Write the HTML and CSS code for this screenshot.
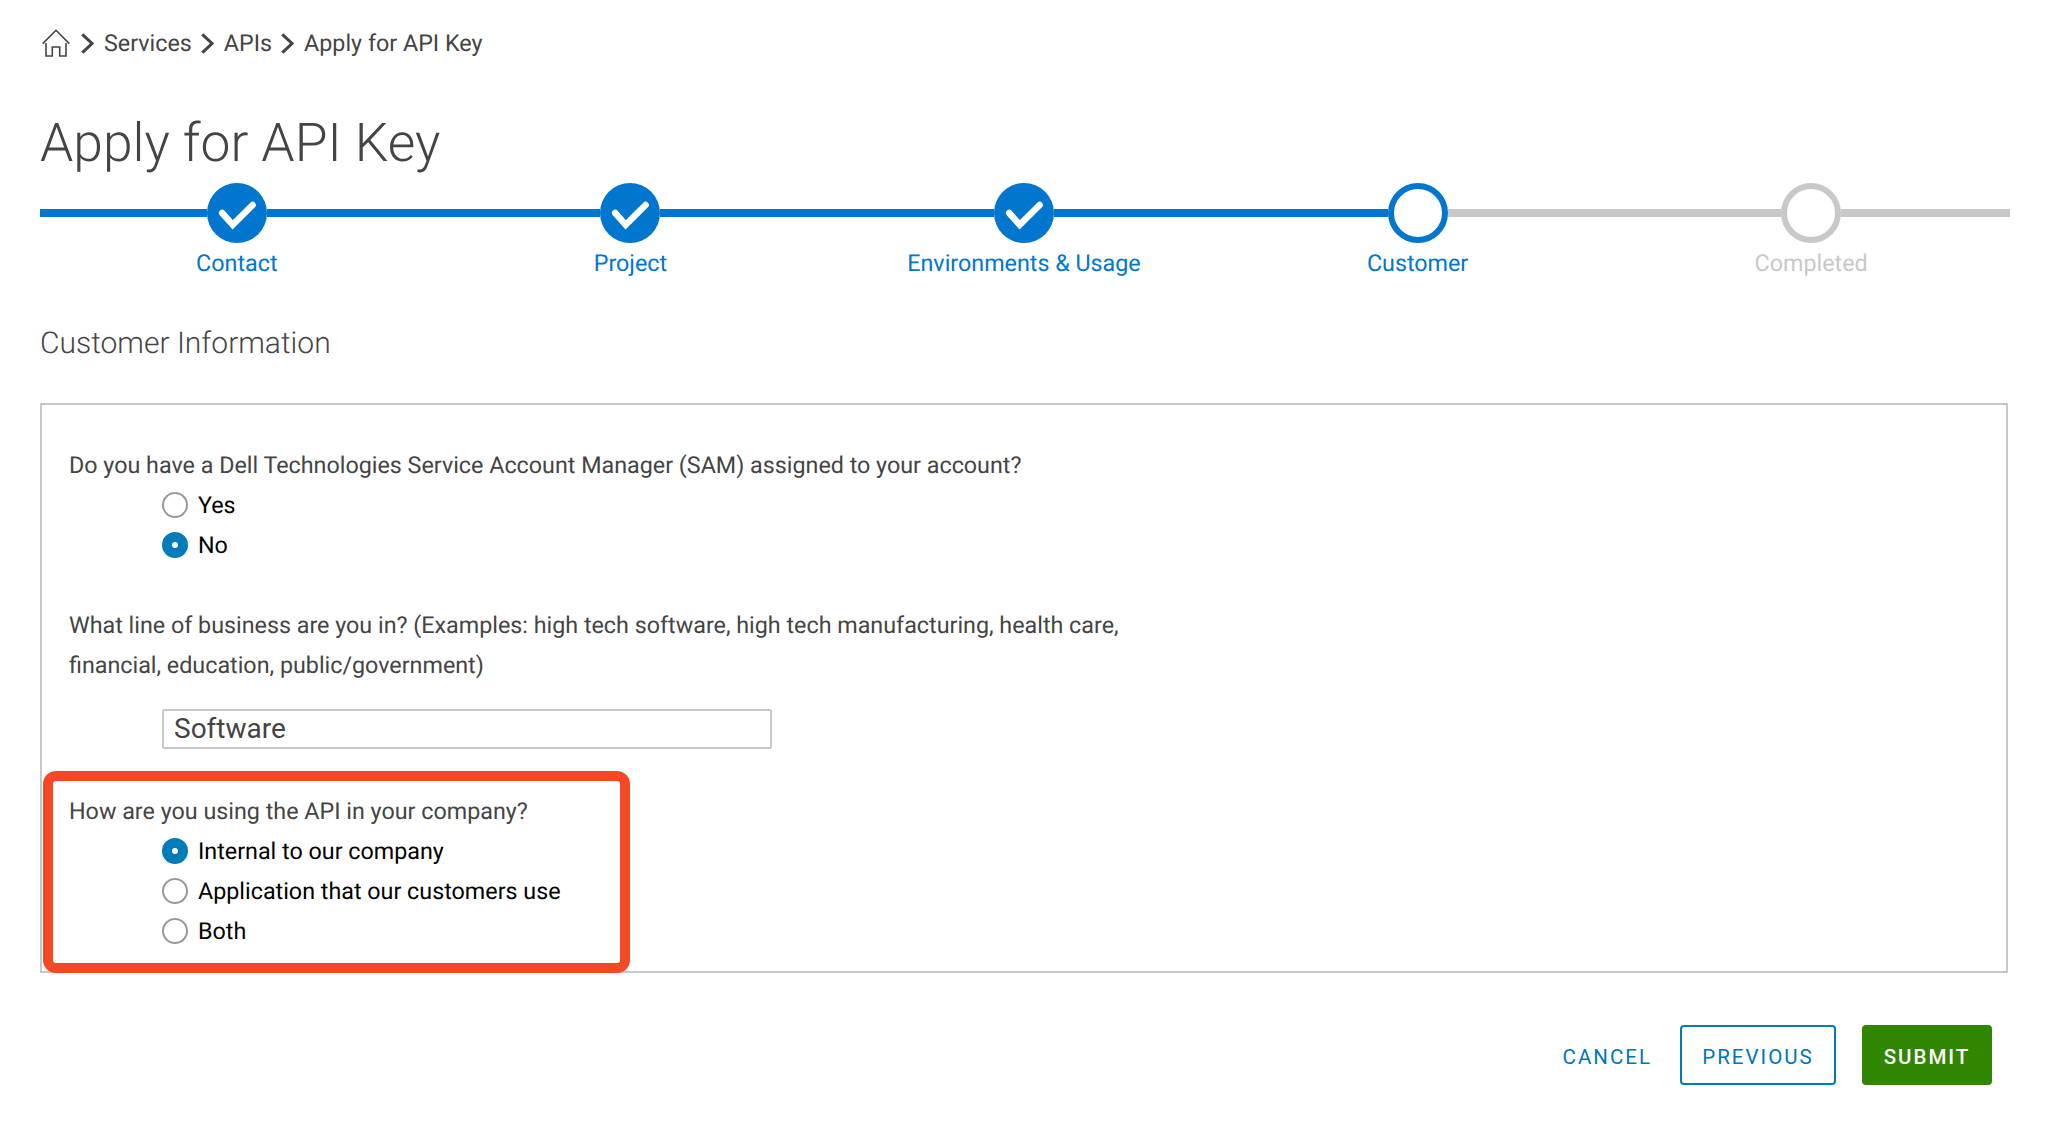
FILE: index.html
```html
<!DOCTYPE html>
<html lang="en">
<head>
  <meta charset="UTF-8" />
  <title>Apply for API Key</title>
  <link rel="stylesheet" href="styles.css">
</head>
<body>

  <nav class="breadcrumb">
    <svg class="home" viewBox="0 0 28 28">
      <path d="M0.7 14.6 L14 1.3 L27.3 14.6 M4 14 V27 H10.3 V18 H17.7 V27 H24 V14" />
    </svg>
    <svg class="chevron" viewBox="0 0 13 21"><path d="M1.3 1.3 L11 10.5 L1.3 19.7" /></svg>
    <a>Services</a>
    <svg class="chevron" viewBox="0 0 13 21"><path d="M1.3 1.3 L11 10.5 L1.3 19.7" /></svg>
    <a>APIs</a>
    <svg class="chevron" viewBox="0 0 13 21"><path d="M1.3 1.3 L11 10.5 L1.3 19.7" /></svg>
    <span>Apply for API Key</span>
  </nav>

  <h1>Apply for API Key</h1>

  <!-- Progress steps -->
  <div class="steps">
    <div class="step done">
      <div class="track"><div class="dot"><svg viewBox="0 0 60 60"><path d="M15.2 30 L25.7 41.8 L45.6 22" /></svg></div></div>
      <div class="label">Contact</div>
    </div>
    <div class="step done">
      <div class="track"><div class="dot"><svg viewBox="0 0 60 60"><path d="M15.2 30 L25.7 41.8 L45.6 22" /></svg></div></div>
      <div class="label">Project</div>
    </div>
    <div class="step done">
      <div class="track"><div class="dot"><svg viewBox="0 0 60 60"><path d="M15.2 30 L25.7 41.8 L45.6 22" /></svg></div></div>
      <div class="label">Environments &amp; Usage</div>
    </div>
    <div class="step current">
      <div class="track"><div class="dot"></div></div>
      <div class="label">Customer</div>
    </div>
    <div class="step">
      <div class="track"><div class="dot"></div></div>
      <div class="label">Completed</div>
    </div>
  </div>

  <h2>Customer Information</h2>

  <form>
    <div class="panel">
      <div class="question">Do you have a Dell Technologies Service Account Manager (SAM) assigned to your account?</div>
      <div class="options">
        <label><input type="radio" name="sam"> Yes</label>
        <label><input type="radio" name="sam" checked> No</label>
      </div>

      <div class="question business">What line of business are you in? (Examples: high tech software, high tech manufacturing, health care,<br>financial, education, public/government)</div>
      <input class="text" type="text" value="Software">

      <div class="usage">
        <div class="question">How are you using the API in your company?</div>
        <div class="options">
          <label><input type="radio" name="usage" checked> Internal to our company</label>
          <label><input type="radio" name="usage"> Application that our customers use</label>
          <label><input type="radio" name="usage"> Both</label>
        </div>
        <div class="highlight"></div>
      </div>
    </div>

    <div class="actions">
      <button type="button" class="cancel">CANCEL</button>
      <button type="button" class="previous">PREVIOUS</button>
      <button type="button" class="submit">SUBMIT</button>
    </div>
  </form>

</body>
</html>
```
FILE: styles.css
```css
* {
  box-sizing: border-box;
}

body {
  margin: 0;
  padding: 23px 40px 0;
  font-family: Roboto, sans-serif;
  font-size: 23.31px;
  line-height: 40px;
  color: #444;
  background-color: #fff;
  text-rendering: geometricPrecision;
}

.breadcrumb {
  display: flex;
  align-items: center;
  height: 40px;
  padding-left: 2px;
}

.breadcrumb svg {
  fill: none;
  stroke: #444;
}

.home {
  width: 28px;
  height: 28px;
  stroke-width: 1.6;
}

.chevron {
  width: 13px;
  height: 21px;
  margin: 0 10px 0 11px;
  stroke-width: 3;
}

.breadcrumb a + .chevron {
  margin-left: 9px;
}

h1 {
  margin: 46px 0 0;
  height: 74px;
  font-size: 53.33px;
  font-weight: 300;
  line-height: 70px;
}

.steps {
  display: flex;
}

.step {
  flex: 1;
  text-align: center;
  color: #c8c9c7;
}

.step.done,
.step.current {
  color: #0076ce;
}

.track {
  display: flex;
  align-items: center;
  height: 60px;
}

.track::before,
.track::after {
  content: "";
  flex: 1;
  height: 8px;
  background-color: currentColor;
}

.step.current .track::after {
  background-color: #c8c9c7;
}

.step:last-child .track::after {
  box-shadow: 2px 0 0 #c8c9c7;
}

.dot {
  width: 60px;
  height: 60px;
  border: 6px solid currentColor;
  border-radius: 50%;
}

.done .dot {
  border: none;
  background-color: #0076ce;
}

.dot svg {
  display: block;
  fill: none;
  stroke: #fff;
  stroke-width: 6.5;
  stroke-linecap: round;
}

h2 {
  margin: 40px 0 0;
  font-size: 30px;
  font-weight: 300;
  line-height: 42px;
}

.panel {
  height: 570px;
  margin-top: 38px;
  padding: 40px 27px 20px;
  border: 2px solid #c8c9c7;
}

.options {
  padding-left: 93px;
}

.options label {
  display: flex;
  align-items: center;
  height: 40px;
  color: #000;
}

input[type="radio"] {
  appearance: none;
  width: 26px;
  height: 26px;
  margin: 0 10px 0 0;
  border: 2px solid #999;
  border-radius: 50%;
}

input[type="radio"]:checked {
  border: 10px solid #007db8;
}

.business {
  margin-top: 40px;
}

.text {
  display: block;
  width: 610px;
  height: 40px;
  margin: 24px 0 0 93px;
  padding: 0 10px 2px;
  border: 2px solid #c8c9c7;
  border-radius: 2px;
  font-family: inherit;
  font-size: 28px;
  color: #444;
}

.usage {
  position: relative;
  margin-top: 42px;
}

.highlight {
  position: absolute;
  top: -20px;
  left: -26px;
  width: 587px;
  height: 202px;
  border: 10px solid #f64824;
  border-radius: 13px;
}

.actions {
  display: flex;
  justify-content: flex-end;
  margin: 52px 16px 0 0;
}

button {
  height: 60px;
  padding: 4px 0 0;
  border: none;
  border-radius: 4px;
  background: none;
  font-family: inherit;
  font-size: 20.5px;
  letter-spacing: 2px;
  color: #0076b8;
}

.cancel {
  margin-right: 28px;
}

.previous {
  width: 156px;
  border: 2px solid #007db8;
}

.submit {
  width: 130px;
  margin-left: 26px;
  background-color: #318600;
  color: #fff;
  font-weight: 500;
}
```
